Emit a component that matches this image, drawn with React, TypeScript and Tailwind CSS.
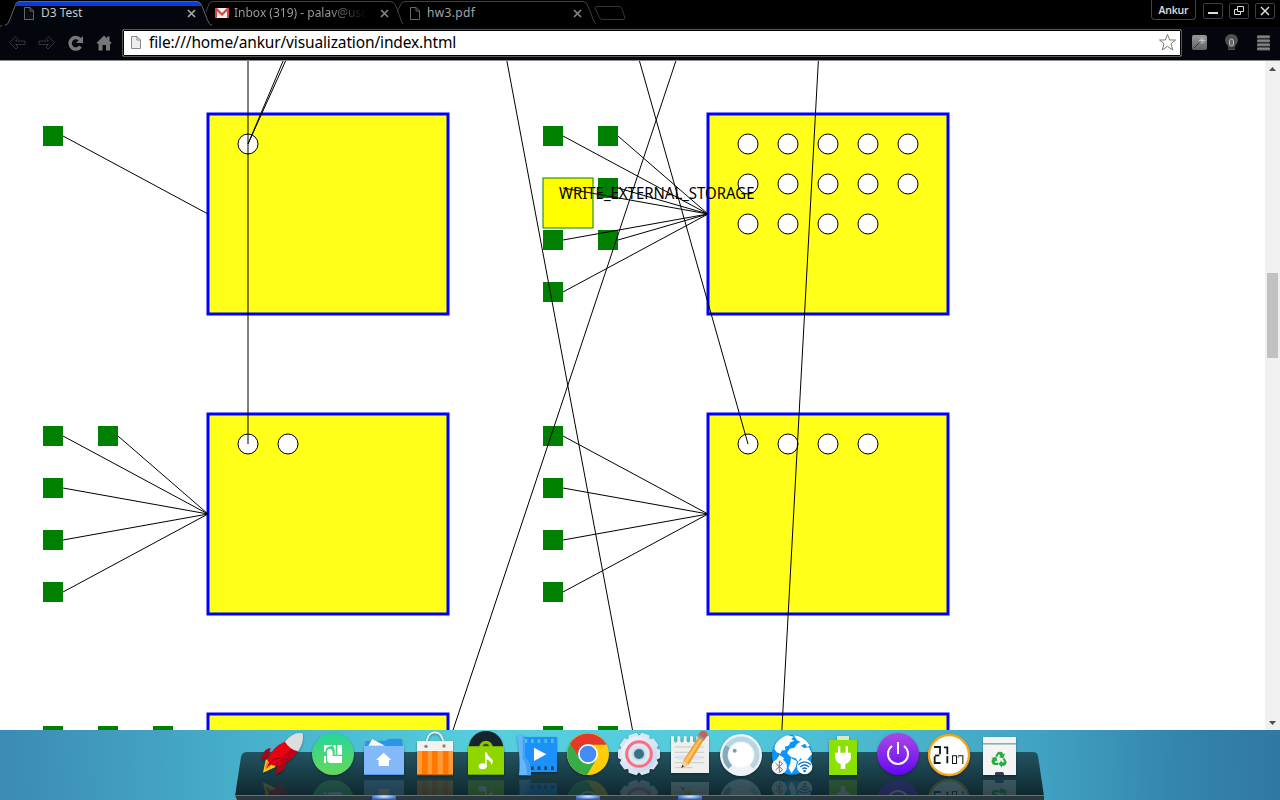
import type { ReactNode } from "react";

const boxes = [
  { x: 208, y: 114, circles: [1] },
  { x: 708, y: 114, circles: [5, 5, 4] },
  { x: 208, y: 414, circles: [2] },
  { x: 708, y: 414, circles: [4] },
  { x: 208, y: 714, circles: [] },
  { x: 708, y: 714, circles: [] },
];

const permissions = [
  [43, 126], [543, 126], [598, 126], [598, 178], [543, 230], [598, 230], [543, 282],
  [43, 426], [98, 426], [43, 478], [43, 530], [43, 582],
  [543, 426], [543, 478], [543, 530], [543, 582],
  [43, 726], [98, 726], [153, 726], [543, 726], [598, 726],
];

const links = [
  [63, 136, 208, 214],
  [563, 136, 708, 214], [618, 136, 708, 214], [563, 188, 708, 214], [618, 188, 708, 214],
  [563, 240, 708, 214], [618, 240, 708, 214], [563, 292, 708, 214],
  [63, 436, 208, 514], [118, 436, 208, 514], [63, 488, 208, 514], [63, 540, 208, 514], [63, 592, 208, 514],
  [563, 436, 708, 514], [563, 488, 708, 514], [563, 540, 708, 514], [563, 592, 708, 514],
  [248, 50, 248, 444], [283.5, 60, 248, 144], [286, 60, 248, 144],
  [506.7, 60, 632.7, 731], [639.2, 60, 748, 444], [676.2, 60, 452.7, 731], [818.4, 60, 781.8, 731],
];

function Graph() {
  return (
    <svg width="1265" height="669" viewBox="0 61 1265 669" className="block shrink-0 bg-white">
      {boxes.map((b, i) => (
        <g key={i}>
          <rect x={b.x} y={b.y} width="240" height="200" fill="#ffff00" fillOpacity="0.9" stroke="#0000ff" strokeWidth="3" />
          {b.circles.map((n, row) =>
            Array.from({ length: n }, (_, c) => (
              <circle key={`${row}-${c}`} cx={b.x + 40 + c * 40} cy={b.y + 30 + row * 40} r="10" fill="#fff" stroke="#000" />
            )),
          )}
        </g>
      ))}
      {permissions.map(([x, y]) => (
        <rect key={`${x}-${y}`} x={x} y={y} width="20" height="20" fill="#008000" />
      ))}
      <rect x="543" y="178" width="50" height="50" fill="#ffff00" stroke="#008000" />
      {links.map(([x1, y1, x2, y2], i) => (
        <line key={i} x1={x1} y1={y1} x2={x2} y2={y2} stroke="#000" />
      ))}
      <text x="559" y="199" textLength="195.5" lengthAdjust="spacingAndGlyphs" className="font-['Noto_Sans',sans-serif] text-[16px]">
        WRITE_EXTERNAL_STORAGE
      </text>
    </svg>
  );
}

function PageIcon({ className, fill }: { className?: string; fill: string }) {
  return (
    <svg width="12" height="15" viewBox="0 0 12 15" className={className}>
      <path d="M1.5 1.5H7L10.5 5V13.5H1.5Z M7 1.5V5H10.5" fill={fill} stroke="currentColor" />
    </svg>
  );
}

function Cross({ className }: { className?: string }) {
  return (
    <svg width="9" height="9" viewBox="0 0 9 9" className={className}>
      <path d="M1 1L8 8M8 1L1 8" stroke="currentColor" strokeWidth="1.7" />
    </svg>
  );
}

function TabStrip() {
  return (
    <div className="relative h-[27px] bg-black">
      <svg className="absolute inset-0" width="640" height="27" viewBox="0 0 640 27" fill="none">
        <path d="M0 27C7 26 8 24 10 18L15 5Q16 1 19 1H197Q200 1 202 5L207 18Q209 25 212 27Z" fill="#03070d" />
        <path d="M15.5 6L17 2.5Q17.500 1 20 1H197Q200 1 201.500 6Z" fill="#0b3bd6" />
        <path d="M0 26H2M5 25.500Q8 25 10 19L15 6Q16 1.500 19 1.500H197Q200 1.500 202 6L207 19Q209 25 212 25.500" stroke="#626466" />
        <path d="M206 12L209 4Q210 1.500 213 1.500H390Q394 1.500 396 6L401 20Q402 23 403 24M397 12L401 4Q402 1.500 405 1.500H583Q586 1.500 588 6L593 19Q594 23 596 24" stroke="#404244" />
        <path d="M597 6.500H619Q621 6.500 622 9L625 18Q625 19.500 623 19.500H603Q600 19.500 599 17L595 8Q595 6.500 597 6.500Z" stroke="#343638" />
      </svg>
      <div className="relative flex h-[26px] items-center font-['Noto_Sans',sans-serif] text-[12px] text-[#c4c8cc]">
        <div className="flex w-[198px] items-center pl-[23px]">
          <PageIcon className="text-[#64676a]" fill="#080b10" />
          <span className="ml-[6px] grow">D3 Test</span>
          <Cross className="mr-[2px] text-[#a8a8a8]" />
        </div>
        <div className="flex w-[194px] items-center pl-[17px]">
          <svg width="14" height="12" viewBox="0 0 14 12">
            <path d="M0 1H14V11H0Z" fill="#eee" />
            <path d="M0 11V1H2L7 6L12 1H14V11H12V4L7 9L2 4V11Z" fill="#d5443a" />
          </svg>
          <span className="ml-[5px] w-[146px] bg-linear-to-r from-[#9da0a3] from-65% to-black to-96% bg-clip-text whitespace-nowrap text-transparent">
            Inbox (319) - palav@usc
          </span>
          <Cross className="shrink-0 text-[#858585]" />
        </div>
        <div className="flex w-[191px] items-center pl-[17px]">
          <PageIcon className="text-[#686868]" fill="#000" />
          <span className="ml-[6px] grow tracking-[0.35px] text-[#a3a6a8]">hw3.pdf</span>
          <Cross className="mr-[1px] text-[#858585]" />
        </div>
        <div className="grow" />
        <div className="flex items-start gap-[6px] self-start pt-[3px] pr-[5px]">
          <div className="-mt-[3px] mr-[1px] flex h-[20px] w-[45px] items-center justify-center rounded-b border border-t-0 border-[#424446] pt-[3px] font-['Open_Sans',sans-serif] text-[10.5px] font-semibold tracking-[-0.2px] text-[#e0e0e0]">
            Ankur
          </div>
          {["min", "max", "close"].map((kind) => (
            <div key={kind} className="flex h-[16px] w-[20px] items-center justify-center rounded-xs border border-[#3c3e40]">
              <svg width="12" height="12" viewBox="0 0 12 12" fill="none" stroke="#ddd">
                {kind === "min" && <path d="M1 8H11" strokeWidth="2" />}
                {kind === "max" && <path d="M4.500 1.500H10.500V6.500H4.500ZM4 4.500H1.500V9.500H7.500V7" />}
                {kind === "close" && <path d="M2 2L10 10M10 2L2 10" strokeWidth="1.5" />}
              </svg>
            </div>
          ))}
        </div>
      </div>
    </div>
  );
}

function Toolbar() {
  return (
    <div className="flex h-[34px] items-center border-b border-[#8b8d8e] bg-[#03070d] pb-[2px]">
      <svg width="122" height="31" viewBox="0 27 122 31" fill="none">
        <path d="M9.500 42.500L16 36.500L18 38.500L15.500 41H25V44.500H15.500L18 47L16 49ZM54.500 42.500L48 36.500L46 38.500L48.500 41H39V44.500H48.500L46 47L48 49Z" stroke="#35393d" />
        <path d="M80 39.500A5.700 5.700 0 1 0 80.500 46.500" stroke="#777" strokeWidth="3.500" />
        <path d="M83 36V43H76Z" fill="#777" />
        <path d="M96.500 43L104 35.500L107 38.500V36.500H109.500V41L111.800 43L110 44V50.500H106V45H102.500V50.500H98.500V44Z" fill="#777" />
      </svg>
      <div className="flex h-[28px] w-[1060px] items-center rounded-xs border border-[#54585b] bg-white pr-[4px] pl-[7px] outline-1 -outline-offset-2 outline-black">
        <PageIcon className="text-[#888]" fill="#eee" />
        <span className="-mt-px ml-[7px] grow font-['Noto_Sans',sans-serif] text-[15.5px] leading-[22px] tracking-[-0.14px] whitespace-nowrap text-black">
          file:///home/ankur/visualization/index.html
        </span>
        <svg width="19" height="19" viewBox="0 0 19 19">
          <path d="M9.500 1.500L11.700 7H17.500L13 10.700L14.700 17L9.500 13.300L4.300 17L6 10.700L1.500 7H7.300Z" fill="#fff" stroke="#777" strokeLinejoin="round" />
        </svg>
      </div>
      <svg width="98" height="31" viewBox="1182 27 98 31">
        <defs>
          <linearGradient id="metal" x1="0" y1="0" x2="0" y2="1">
            <stop stopColor="#999" />
            <stop offset="1" stopColor="#606060" />
          </linearGradient>
        </defs>
        <rect x="1192" y="35" width="15" height="15" rx="2" fill="url(#metal)" />
        <path d="M1194 48L1201 41" stroke="#333" />
        <path d="M1202 37V44M1198.500 40.500H1205.500M1199.500 38L1204.500 43M1204.500 38L1199.500 43" stroke="#ccc" strokeWidth="0.8" />
        <path d="M1228 46Q1225 43 1225 40A6.500 6 0 0 1 1238 40Q1238 43 1235 46V50H1228Z" fill="#505050" />
        <rect x="1229.500" y="39" width="4" height="7" rx="2" fill="#666" stroke="#bbb" />
        <path d="M1228 48H1235" stroke="#222" />
        {[35.5, 39.5, 43.5, 47.5].map((y) => (
          <rect key={y} x="1257" y={y} width="13" height="3" rx="1" fill="url(#metal)" />
        ))}
      </svg>
    </div>
  );
}

function Scrollbar() {
  return (
    <div className="flex w-[15px] flex-col items-center bg-[#f0f0f0]">
      <svg width="15" height="14" viewBox="0 0 15 14">
        <path d="M4 10L7.500 6L11 10Z" fill="#505050" />
      </svg>
      <div className="mt-[198px] h-[85px] w-[11px] bg-[#c1c1c1]" />
      <div className="grow" />
      <svg width="15" height="14" viewBox="0 0 15 14">
        <path d="M4 5L7.500 9L11 5Z" fill="#505050" />
      </svg>
    </div>
  );
}

/* Dock artwork is drawn on a 3x grid; dx shifts each drawing into its 51px slot. */
type DockItem = { name: string; dx: number; active?: boolean; art: ReactNode };

const dockItems: DockItem[] = [
  {
    name: "rocket",
    dx: -26,
    art: (
      <>
        <path d="M122 69Q99 70 93 107L112 98ZM166 110Q178 130 136 149L143 119Z" fill="#a70818" />
        <path d="M107 105L99 143L135 127L139 115L119 98Z" fill="#ffca10" />
        <path d="M110 111L105 134L128 118" fill="#ff7518" />
        <path d="M164 50Q130 64 111 104Q122 124 139 122Q185 113 204 76Z" fill="#e90013" />
        <path d="M186 66Q155 108 128 120Q185 116 204 76Z" fill="#bd0015" />
        <path d="M218 25Q190 19 165 50Q178 73 204 79Q223 52 218 25Z" fill="#ddd" />
        <path d="M150 98Q119 96 110 130Q127 104 148 101Z" fill="#bc0018" />
        <path d="M155 98Q126 99 119 122" fill="none" stroke="#870b19" strokeWidth="3" />
      </>
    ),
  },
  {
    name: "puzzle",
    dx: -77,
    art: (
      <>
        <circle cx="309" cy="87" r="63" fill="url(#mint)" />
        <path d="M282 60H306V63Q287 64 286 80H282ZM310 60H317V89H314V76Q314 68 310 65ZM322 60H336V89H322ZM282 93H288V114H282ZM291 80Q292 71 299 71Q307 72 308 80V93H336V114H300Q291 112 291 102Z" fill="#fff" />
      </>
    ),
  },
  {
    name: "home folder",
    dx: -128,
    active: true,
    art: (
      <>
        <path d="M407 48H466L479 42H516V80H407Z" fill="#2b94ed" />
        <path d="M427 42L465 62H415Z" fill="#fff" />
        <path d="M402 63H522V148H402Z" fill="#83b9fb" />
        <path d="M402 147H522V150H402Z" fill="#559be8" />
        <path d="M461 83L484 105H477V123H446V105H438Z" fill="#fff" />
      </>
    ),
  },
  {
    name: "shopping bag",
    dx: 21,
    art: (
      <>
        <path d="M-39 48H69V78H-39Z" fill="#f3f1ed" />
        <path d="M-39 78H69V150H-39Z" fill="#ff9a35" />
        <path d="M-24 78H-7V150H-24ZM6 78H23V150H6ZM39 78H55V150H39Z" fill="#ff7600" />
        <path d="M-39 147H69V151H-39Z" fill="#cc6513" />
        <path d="M-12 64Q-9 22 15 22Q38 22 42 62" fill="none" stroke="#eee" strokeWidth="5" />
        <circle cx="-12" cy="64" r="5" fill="#887" />
        <circle cx="42" cy="63" r="5" fill="#887" />
      </>
    ),
  },
  {
    name: "music",
    dx: -30,
    art: (
      <>
        <circle cx="168" cy="70" r="52" fill="#18242c" />
        <circle cx="168" cy="67" r="20" fill="#83c700" />
        <circle cx="168" cy="65" r="9" fill="#31500c" />
        <path d="M114 64H222V150H114Z" fill="#8fd600" />
        <path d="M114 147H222V150H114Z" fill="#67a000" />
        <ellipse cx="158" cy="124" rx="12" ry="9" fill="#fff" />
        <path d="M165 82H170Q171 92 181 98Q194 107 184 120Q184 108 170 103V124H165Z" fill="#fff" />
      </>
    ),
  },
  {
    name: "video",
    dx: -81,
    art: (
      <>
        <path d="M272 36H381V141H272Z" fill="#1c91fb" />
        {[284, 303, 323, 343, 363].map((x) => (
          <g key={x}>
            <rect x={x} y="42" width="8" height="12" fill="#47bee8" />
            <rect x={x} y="124" width="8" height="11" fill="#15455e" />
          </g>
        ))}
        <path d="M312 68L349 88L312 108Z" fill="#fff" />
        <path d="M261 31Q276 26 284 36V96Q302 110 303 151H267Q272 100 261 31Z" fill="#65b6ff" />
        <path d="M278 34H284V96Q302 110 303 151H292Q289 112 278 101Z" fill="#429ff2" />
      </>
    ),
  },
  {
    name: "chrome",
    dx: -132,
    active: true,
    art: (
      <>
        <circle cx="474" cy="87" r="63" fill="#ffcd08" />
        <path d="M420 56A63 63 0 0 1 528 56L528 59H474L447 103Z" fill="#e43829" />
        <path d="M420 56A63 63 0 0 0 471 150L500 102Q489 119 466 114Q450 108 446 94L420 56Z" fill="#38ad45" />
        <circle cx="474" cy="87" r="30" fill="#fff" />
        <circle cx="474" cy="87" r="25" fill="#438cf5" />
      </>
    ),
  },
  {
    name: "settings",
    dx: 17,
    art: (
      <>
        {Array.from({ length: 5 }, (_, i) => (
          <path
            key={i}
            d="M10 34L15 24H39L44 34V140L39 150H15L10 140Z"
            fill="#dae4f4"
            transform={`rotate(${i * 36 + 18} 27 87)`}
          />
        ))}
        <circle cx="27" cy="87" r="53" fill="url(#gear)" />
        <circle cx="27" cy="87" r="37" fill="#dce7f5" stroke="#fb6e80" strokeWidth="9" />
        <circle cx="27" cy="87" r="20" fill="#c6d5e5" />
        <circle cx="27" cy="87" r="15" fill="#377383" />
      </>
    ),
  },
  {
    name: "text editor",
    dx: -34,
    active: true,
    art: (
      <>
        <path d="M123 34H132V48Q137 57 142 48V34H151V48Q156 57 161 48V34H170V48Q175 57 180 48V34H189V48Q194 57 199 48V34H208V48Q213 57 218 48V34H237V144H123Z" fill="#efefed" />
        <path d="M134 66H222M134 82H222M134 97H222M134 113H222M134 128H188" stroke="#b8b8b8" strokeWidth="2" />
        <path d="M142 92H214V104H142Z" fill="#dce2f4" />
        <path d="M154 129L161 105L208 32L224 41L176 119Z" fill="#eba034" />
        <path d="M163 108L214 34L219 38L171 115Z" fill="#ffc15c" />
        <path d="M154 129L160 107L176 118Z" fill="#efd49d" />
        <path d="M154 129L157 120L162 124Z" fill="#222" />
        <path d="M204 34L211 22Q218 15 229 21Q235 27 228 38L221 46Z" fill="#ce5d58" />
        <path d="M201 36L221 48L225 41L206 29Z" fill="#999" />
      </>
    ),
  },
  {
    name: "disk",
    dx: -85,
    art: (
      <>
        <circle cx="333" cy="90" r="63" fill="#edf3f8" />
        <path d="M301 126A48 48 0 1 1 365 126" fill="none" stroke="#b7d5e2" strokeWidth="15" />
        <path d="M301 126A48 48 0 0 1 293 64" fill="none" stroke="#86aabb" strokeWidth="15" />
        <circle cx="333" cy="90" r="37" fill="#fff" />
        <circle cx="314" cy="77" r="6" fill="#71a1b5" />
      </>
    ),
  },
  {
    name: "network",
    dx: -136,
    art: (
      <>
        <circle cx="486" cy="89" r="60" fill="#0c95f8" />
        <path d="M435 61Q447 38 472 31L491 35L484 43L493 47L481 52L477 61L465 65L466 76L456 76L451 86L440 82L433 72ZM491 31Q524 34 540 62L531 66L525 56L513 62L522 69L537 67L546 87L533 102L520 109L511 99L505 111L497 100L483 96L471 84L479 71L493 68L501 57L511 51L501 46ZM483 99L501 109L497 126L485 145L475 129L481 114ZM449 90L463 100L458 106L439 104Z" fill="#fff" />
        <circle cx="448" cy="125" r="23" fill="#f4f4f4" />
        <circle cx="524" cy="125" r="23" fill="#fff" />
        <path d="M437 115L458 134L448 143V108L458 116L437 135" fill="none" stroke="#777" strokeWidth="3" />
        <path d="M505 119Q524 102 543 119M511 126Q524 114 537 126M517 132Q524 126 531 132" fill="none" stroke="#1472c5" strokeWidth="4" />
        <circle cx="524" cy="138" r="4" fill="#1472c5" />
      </>
    ),
  },
  {
    name: "power manager",
    dx: 3,
    art: (
      <>
        <path d="M51 33H87V46H51Z" fill="#dce9c8" />
        <path d="M27 45H111V150H27Z" fill="#8be100" />
        <path d="M54 64H61V83H77V64H84V83H93V96Q92 112 76 117V132H62V117Q47 112 45 96V83H54Z" fill="#fff" />
      </>
    ),
  },
  {
    name: "shutdown",
    dx: -52,
    art: (
      <>
        <circle cx="234" cy="87" r="63" fill="url(#violet)" />
        <path d="M216 63A30 30 0 1 0 252 63M234 51V87" fill="none" stroke="#fff" strokeWidth="6" />
      </>
    ),
  },
  {
    name: "clock",
    dx: -103,
    art: (
      <>
        <circle cx="387" cy="90" r="60" fill="#fff" stroke="#f6a51b" strokeWidth="7" />
        <path d="M342 66H360V88M358 91L345 92M344 94V114H362M372 67H382V88M382 93V115" fill="none" stroke="#101b1e" strokeWidth="5.5" />
        <path d="M397.5 92.500H409.500V115.500H397.500ZM415 92.500H428.500V117" fill="none" stroke="#101b1e" strokeWidth="3.2" />
        <path d="M415 92V99" stroke="#101b1e" strokeWidth="1.6" />
      </>
    ),
  },
  {
    name: "trash",
    dx: -154,
    art: (
      <>
        <path d="M489 36H588V54H489ZM489 58H588V150H489Z" fill="#f4f4f4" />
        <path d="M489 54H588V58H489Z" fill="#8dadb9" />
        <path d="M525 150V145Q525 141 530 141H547Q552 141 552 150Z" fill="#3d3856" />
        {[0, 120, 240].map((a) => (
          <g key={a} transform={`rotate(${a} 538 104)`}>
            <path d="M526 93L532 83Q534 80 539 80L546 81L550 88L555 85L550 100L536 97L541 94L537 87L531 97Z" fill="#27ad3c" />
          </g>
        ))}
      </>
    ),
  },
];

function DockIcon({ item }: { item: DockItem }) {
  const place = `translate(${item.dx} -5) scale(0.33333)`;
  return (
    <svg
      role="img"
      aria-label={item.name}
      width="51"
      height="70"
      viewBox="0 0 51 70"
      className={item.name === "shutdown" ? "ml-[4px] shrink-0" : "shrink-0"}
    >
      <g className="drop-shadow-[0_1px_1px_rgba(0,0,0,0.35)]">
        <g transform={place}>{item.art}</g>
      </g>
      <g clipPath="url(#shelf)" opacity="0.16">
        <g transform="translate(0 95) scale(1 -1)">
          <g transform={place}>{item.art}</g>
        </g>
      </g>
      {item.active && <rect x="14" y="65" width="24" height="5" fill="url(#glow)" />}
    </svg>
  );
}

function Desktop() {
  return (
    <div className="relative h-[70px] overflow-hidden bg-[#46adc9]">
      <svg className="absolute inset-0" width="1280" height="70" viewBox="0 730 1280 70">
        <defs>
          <linearGradient id="shade" x1="0" y1="0" x2="0" y2="1">
            <stop stopColor="#235462" />
            <stop offset="1" stopColor="#0f272e" />
          </linearGradient>
          <linearGradient id="mint" x1="0" y1="0" x2="0" y2="1">
            <stop stopColor="#25d69a" />
            <stop offset="1" stopColor="#65d85c" />
          </linearGradient>
          <linearGradient id="violet" x1="0" y1="0" x2="0" y2="1">
            <stop stopColor="#ad48e7" />
            <stop offset="1" stopColor="#6108f1" />
          </linearGradient>
          <linearGradient id="gear" x1="0" y1="0" x2="1" y2="1">
            <stop stopColor="#f5f6fb" />
            <stop offset="1" stopColor="#bdd5f0" />
          </linearGradient>
          <linearGradient id="sky" gradientUnits="userSpaceOnUse" x1="0" y1="765" x2="1278" y2="735">
            <stop stopColor="#3c8ab5" />
            <stop offset="0.18" stopColor="#46adc9" />
            <stop offset="0.38" stopColor="#55cfdd" />
            <stop offset="0.56" stopColor="#53cbdb" />
            <stop offset="0.81" stopColor="#41a3c3" />
            <stop offset="0.92" stopColor="#3485ae" />
            <stop offset="1" stopColor="#3078a4" />
          </linearGradient>
          <radialGradient id="glow" cy="0.3" r="0.6">
            <stop stopColor="#d6e8ff" />
            <stop offset="0.5" stopColor="#86a9e6" />
            <stop offset="1" stopColor="#3a5eb2" />
          </radialGradient>
          <clipPath id="shelf">
            <rect x="0" y="49" width="51" height="16" />
          </clipPath>
        </defs>
        <rect y="730" width="1280" height="70" fill="url(#sky)" />
        <path d="M247 752H1033Q1037 752 1038 756L1044 796H235L241 757Q242 752 247 752Z" fill="url(#shade)" />
        <path d="M235 795H1044V800H237Z" fill="#29393e" />
        <path d="M235 795.500H1044" stroke="#657378" />
      </svg>
      <div className="relative flex pl-[256px]">
        {dockItems.map((item) => (
          <DockIcon key={item.name} item={item} />
        ))}
      </div>
    </div>
  );
}

export default function App() {
  return (
    <div className="flex h-[800px] w-[1280px] flex-col overflow-hidden bg-white">
      <TabStrip />
      <Toolbar />
      <div className="flex h-[669px]">
        <Graph />
        <Scrollbar />
      </div>
      <Desktop />
    </div>
  );
}
